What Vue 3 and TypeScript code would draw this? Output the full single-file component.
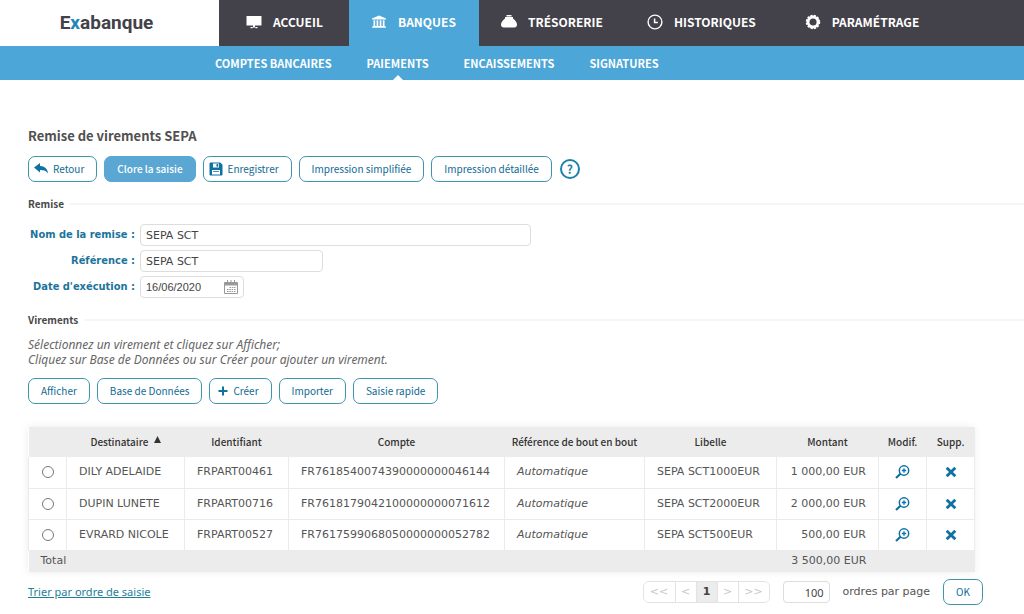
<script setup lang="ts">
import { ref } from 'vue'

interface Order {
  name: string
  id: string
  account: string
  label: string
  amount: string
}

const menu = [
  { label: 'ACCUEIL', icon: 'screen' },
  { label: 'BANQUES', icon: 'bank' },
  { label: 'TRÉSORERIE', icon: 'purse' },
  { label: 'HISTORIQUES', icon: 'clock' },
  { label: 'PARAMÉTRAGE', icon: 'gear' },
]
const submenu = ['COMPTES BANCAIRES', 'PAIEMENTS', 'ENCAISSEMENTS', 'SIGNATURES']

const orders: Order[] = [
  { name: 'DILY ADELAIDE', id: 'FRPART00461', account: 'FR7618540074390000000046144', label: 'SEPA SCT1000EUR', amount: '1 000,00 EUR' },
  { name: 'DUPIN LUNETE', id: 'FRPART00716', account: 'FR7618179042100000000071612', label: 'SEPA SCT2000EUR', amount: '2 000,00 EUR' },
  { name: 'EVRARD NICOLE', id: 'FRPART00527', account: 'FR7617599068050000000052782', label: 'SEPA SCT500EUR', amount: '500,00 EUR' },
]

const batchName = ref('SEPA SCT')
const reference = ref('SEPA SCT')
const date = ref('16/06/2020')
const perPage = ref('100')
const selected = ref('')
</script>

<template>
  <div class="page">
    <header class="top">
      <a href="#" class="logo">E<span class="logo-x">x</span>abanque</a>
      <nav class="menu" aria-label="Menu principal">
        <a v-for="m in menu" :key="m.label" href="#" class="menu-item" :class="[m.icon, { active: m.icon === 'bank' }]">
          <svg v-if="m.icon === 'screen'" width="16" height="16" viewBox="0 0 16 16" fill="#fff">
            <path d="M.5 2h15v9.500H.5z" />
            <path d="M7 11h2v2h2.500v1.200h-2v-.6h-3v.6h-2V13H7z" />
          </svg>
          <svg v-else-if="m.icon === 'bank'" width="16" height="16" viewBox="0 0 16 16" fill="#fff">
            <path d="M8 1.500 15 4.500v1H1v-1z" />
            <path d="M2.500 6.200h1.700V12H2.500zM5.600 6.200h1.700V12H5.600zM8.700 6.200h1.700V12H8.700zM11.800 6.200h1.700V12h-1.700zM1.800 12h12.400v.8h.8v1H1v-1h.8z" />
          </svg>
          <svg v-else-if="m.icon === 'purse'" width="16" height="16" viewBox="0 0 16 16" fill="#fff">
            <path d="M5.500.9h5v1.500h-5zM4 3h8v1.400c2 1.400 3.900 3.800 4 6 0 2-1 3-2.700 3H2.700C1 13.400 0 12.400 0 10.400c.1-2.200 2-4.600 4-6z" />
          </svg>
          <svg v-else-if="m.icon === 'clock'" width="16" height="16" viewBox="0 0 16 16" fill="none" stroke="#fff">
            <circle cx="8" cy="8" r="6.900" stroke-width="1.400" />
            <path d="M7.600 4.500v4h3.200" stroke-width="1.500" />
          </svg>
          <svg v-else width="16" height="16" viewBox="0 0 16 16" fill="none" stroke="#fff">
            <circle cx="8" cy="8" r="5" stroke-width="2.800" />
            <circle cx="8" cy="8" r="6.500" stroke-width="1.500" stroke-dasharray="2.200 1.203" />
          </svg>
          <span>{{ m.label }}</span>
        </a>
      </nav>
    </header>

    <nav class="submenu" aria-label="Sous-menu">
      <a v-for="s in submenu" :key="s" href="#" :class="{ current: s === 'PAIEMENTS' }">{{ s }}</a>
    </nav>

    <main>
      <h1>Remise de virements SEPA</h1>
      <div class="buttons">
        <button type="button" class="btn with-icon">
          <svg width="14" height="14" viewBox="0 0 14 14" fill="#0f71a3">
            <path d="M0 5.600 6 1v2.900c4.600.1 7.500 2.600 8 7.600-1.600-2.700-4-3.700-8-3.600v2.700z" />
          </svg>
          Retour
        </button>
        <button type="button" class="btn primary">Clore la saisie</button>
        <button type="button" class="btn with-icon save">
          <svg width="14" height="14" viewBox="0 0 14 14">
            <path d="M1.500.5h9.800L13.500 2.700v9.800a1 1 0 0 1-1 1h-11a1 1 0 0 1-1-1v-11a1 1 0 0 1 1-1z" fill="#0f71a3" />
            <path d="M4 1.500h6v4H4zM3 8h8v4.500H3z" fill="#fff" />
            <path d="M7.500 2h1.700v2.800H7.500zM4 9.200h6v.8H4z" fill="#0f71a3" />
          </svg>
          Enregistrer
        </button>
        <button type="button" class="btn">Impression simplifiée</button>
        <button type="button" class="btn">Impression détaillée</button>
        <button type="button" class="help" aria-label="Aide">?</button>
      </div>

      <h2>Remise</h2>
      <form class="form" @submit.prevent>
        <label for="nom">Nom de la remise :</label>
        <input id="nom" v-model="batchName" class="field wide" type="text" />
        <label for="ref">Référence :</label>
        <input id="ref" v-model="reference" class="field medium" type="text" />
        <label for="date">Date d'exécution :</label>
        <div class="date-box">
          <input id="date" v-model="date" type="text" />
          <button type="button" aria-label="Calendrier">
            <svg width="14" height="14" viewBox="0 0 14 14" fill="none" stroke="#999">
              <path d="M.5 2.500h13v11H.5z" />
              <path d="M.5 4h13" stroke-width="3" />
              <path d="M3.500 0v4M7 0v4M10.500 0v4" />
              <path d="M5.500 7.500h6M3 9.500h8.500M3 11.500h8.500" stroke-dasharray="1.500 .8" />
            </svg>
          </button>
        </div>
      </form>

      <h2>Virements</h2>
      <p class="hint">Sélectionnez un virement et cliquez sur Afficher;<br />Cliquez sur Base de Données ou sur Créer pour ajouter un virement.</p>
      <div class="buttons">
        <button type="button" class="btn">Afficher</button>
        <button type="button" class="btn">Base de Données</button>
        <button type="button" class="btn with-icon plus">
          <svg width="10" height="10" viewBox="0 0 10 10" stroke="#0f71a3" stroke-width="2"><path d="M5 .5v9M.5 5h9" /></svg>
          Créer
        </button>
        <button type="button" class="btn">Importer</button>
        <button type="button" class="btn">Saisie rapide</button>
      </div>

      <div class="list">
        <table>
          <colgroup>
            <col class="c-radio" /><col class="c-name" /><col class="c-id" /><col class="c-account" /><col class="c-ref" />
            <col class="c-label" /><col class="c-amount" /><col class="c-act" /><col class="c-act" />
          </colgroup>
          <thead>
            <tr>
              <td></td>
              <th scope="col">
                Destinataire
                <svg class="sort" width="7" height="7" viewBox="0 0 7 7" fill="#333"><path d="M3.500 0 7 7H0z" /></svg>
              </th>
              <th scope="col">Identifiant</th>
              <th scope="col">Compte</th>
              <th scope="col">Référence de bout en bout</th>
              <th scope="col">Libelle</th>
              <th scope="col">Montant</th>
              <th scope="col">Modif.</th>
              <th scope="col">Supp.</th>
            </tr>
          </thead>
          <tbody>
            <tr v-for="o in orders" :key="o.id">
              <td class="center"><input v-model="selected" type="radio" name="order" :value="o.id" :aria-label="o.name" /></td>
              <td>{{ o.name }}</td>
              <td>{{ o.id }}</td>
              <td>{{ o.account }}</td>
              <td class="auto">Automatique</td>
              <td>{{ o.label }}</td>
              <td class="amount">{{ o.amount }}</td>
              <td class="center">
                <button type="button" class="icon" aria-label="Modifier">
                  <svg width="15" height="14" viewBox="0 0 15 14" fill="none" stroke="#0f71a3">
                    <circle cx="9" cy="5.500" r="4.700" stroke-width="1.500" />
                    <path d="M5.500 8.800 1 13" stroke-width="2.200" />
                    <path d="M9 3.300v4.400M6.800 5.500h4.400" stroke-width="1.300" />
                  </svg>
                </button>
              </td>
              <td class="center">
                <button type="button" class="icon" aria-label="Supprimer">
                  <svg width="12" height="12" viewBox="0 0 12 12" stroke="#0f71a3" stroke-width="2.800"><path d="m1.700 1.700 8.600 8.600M10.300 1.700l-8.600 8.600" /></svg>
                </button>
              </td>
            </tr>
          </tbody>
          <tfoot>
            <tr>
              <td colspan="6">Total</td>
              <td class="amount">3 500,00 EUR</td>
              <td colspan="2"></td>
            </tr>
          </tfoot>
        </table>
      </div>

      <div class="bottom">
        <a href="#" class="sort-link">Trier par ordre de saisie</a>
        <nav class="pager" aria-label="Pagination">
          <button type="button" class="far">&lt;&lt;</button>
          <button type="button">&lt;</button>
          <button type="button" class="now">1</button>
          <button type="button">&gt;</button>
          <button type="button" class="far">&gt;&gt;</button>
        </nav>
        <input id="per-page" v-model="perPage" class="field per-page" type="text" />
        <label for="per-page">ordres par page</label>
        <button type="button" class="btn">OK</button>
      </div>
    </main>
  </div>
</template>

<style>
body {
  margin: 0;
  background: #fff;
}
</style>

<style scoped>
.page {
  --sans: 'Noto Sans CJK JP', 'Noto Sans', sans-serif;
  font-family: 'DejaVu Sans', Verdana, sans-serif;
  font-size: 11px;
  line-height: 16px;
  color: #555;
}
* {
  box-sizing: border-box;
}
a {
  text-decoration: none;
}
button {
  margin: 0;
  cursor: pointer;
}
svg {
  display: block;
  flex: none;
}
.top {
  display: flex;
  height: 46px;
  background: #434149;
}
.logo {
  width: 219px;
  flex: none;
  padding-right: 6px;
  background: #fff;
  color: #434149;
  font: 700 19px/46px Roboto, sans-serif;
  text-align: center;
}
.logo-x {
  color: #2485b5;
}
.menu {
  display: flex;
}
.menu-item {
  display: flex;
  align-items: center;
  gap: 11px;
  min-width: 130px;
  padding: 0 22px 2px;
  color: #fff;
  font: 700 12px/44px var(--sans);
}
.menu-item.active {
  background: #4ca6d7;
}
.menu-item.screen,
.menu-item.gear {
  padding-left: 27px;
}
.submenu {
  display: flex;
  gap: 35px;
  height: 34px;
  padding-left: 215px;
  background: #4ca6d7;
}
.submenu a {
  position: relative;
  color: #fff;
  font: 700 11px/34px var(--sans);
}
.submenu .current::after {
  content: '';
  position: absolute;
  bottom: 0;
  left: 50%;
  margin-left: -5px;
  border: 5px solid transparent;
  border-top: 0;
  border-bottom-color: #fff;
}
main {
  padding: 48px 0 0 28px;
}
h1 {
  margin: 0 0 12px;
  color: #505050;
  font: 700 13px/16px var(--sans);
}
h2 {
  display: flex;
  align-items: center;
  gap: 6px;
  margin: 0;
  color: #484848;
  font: 700 10px/16px var(--sans);
}
h2::after {
  content: '';
  flex: 1;
  height: 2px;
  background: #f5f5f5;
}
.buttons {
  display: flex;
  align-items: center;
  gap: 7px;
}
.btn {
  display: flex;
  align-items: center;
  height: 26px;
  padding: 0 12px;
  border: 1px solid #3f94ae;
  border-radius: 7px;
  background: #fff;
  color: #0f6a94;
  font: 400 10px/24px var(--sans);
  white-space: nowrap;
}
.btn.with-icon {
  gap: 5px;
  padding-left: 5px;
}
.btn.plus {
  padding-left: 8px;
}
.btn.primary {
  border-color: #5aa7d3;
  background: #5aa7d3;
  color: #fff;
  font-weight: 500;
}
.help {
  width: 20px;
  height: 20px;
  margin-left: 1px;
  padding: 0;
  border: 2px solid #1f80ac;
  border-radius: 50%;
  background: #fff;
  color: #1f80ac;
  font: 700 12px/16px var(--sans);
}
.buttons + h2 {
  margin-top: 14px;
}
.form {
  display: grid;
  grid-template-columns: 107px 1fr;
  column-gap: 5px;
  row-gap: 4px;
  align-items: center;
  margin: 12px 0 14px;
}
.form label {
  color: #1c749c;
  font: 700 11px/20px 'DejaVu Sans Condensed', 'DejaVu Sans', sans-serif;
  text-align: right;
  white-space: nowrap;
}
.field,
.date-box {
  height: 22px;
  padding: 0 5px;
  border: 1px solid #ddd;
  border-radius: 4px;
  background: #fff;
  color: #444;
  font: 11px/20px 'DejaVu Sans', Verdana, sans-serif;
}
.wide {
  width: 391px;
}
.medium {
  width: 183px;
}
.date-box {
  display: flex;
  align-items: center;
  width: 104px;
}
.date-box input {
  flex: 1;
  min-width: 0;
  padding: 0;
  border: 0;
  background: none;
  color: #444;
  font: 11px/20px 'Liberation Sans', Arial, sans-serif;
}
.date-box button,
.icon {
  padding: 0;
  border: 0;
  background: none;
}
.hint {
  margin: 9px 0 11px;
  color: #666;
  font: italic 12px/15px 'Noto Sans', sans-serif;
}
.list {
  margin: 23px 50px 0 0;
  box-shadow: 0 0 8px rgba(0, 0, 0, 0.08);
}
table {
  width: 100%;
  table-layout: fixed;
  border-collapse: collapse;
}
.c-radio {
  width: 38px;
}
.c-name {
  width: 118px;
}
.c-id {
  width: 104px;
}
.c-account {
  width: 216px;
}
.c-ref {
  width: 140px;
}
.c-label {
  width: 132px;
}
.c-amount {
  width: 102px;
}
.c-act {
  width: 48px;
}
thead,
tfoot {
  background: #ececec;
}
th {
  height: 30px;
  padding: 0;
  color: #333;
  font: 500 10px/16px var(--sans);
  white-space: nowrap;
}
.sort {
  display: inline-block;
  margin: 0 0 3px 3px;
}
td {
  padding: 0 12px;
  white-space: nowrap;
}
tbody td {
  height: 31px;
  border: 1px solid #ebebeb;
}
tbody tr:first-child td {
  border-top: 0;
}
tfoot td {
  height: 22px;
}
td.center {
  padding: 0;
}
.center > * {
  display: block;
  margin: 0 auto;
}
input[type='radio'] {
  width: 12px;
  height: 12px;
}
.auto {
  font-style: italic;
}
td.amount {
  text-align: right;
}
.bottom {
  display: flex;
  align-items: center;
  margin: 7px 41px 0 0;
}
.sort-link {
  margin-right: auto;
  color: #1c8098;
  font: 11px/16px 'Noto Sans', sans-serif;
  text-decoration: underline;
}
.pager {
  display: flex;
  height: 22px;
  border: 1px solid #e2e2e2;
  border-radius: 6px;
  overflow: hidden;
}
.pager button {
  width: 21px;
  padding: 0;
  border: 0;
  border-left: 1px solid #e2e2e2;
  background: #fff;
  color: #c8c8c8;
  font: 11px/20px 'DejaVu Sans', Verdana, sans-serif;
}
.pager .far {
  width: 31px;
}
.pager button:first-child {
  border-left: 0;
}
.pager .now {
  background: #ececec;
  color: #444;
  font-weight: 700;
}
.per-page {
  width: 47px;
  margin: 0 13px;
  font: 11px/20px 'Noto Sans', sans-serif;
  text-align: right;
}
.bottom .btn {
  margin-left: 13px;
}
</style>
